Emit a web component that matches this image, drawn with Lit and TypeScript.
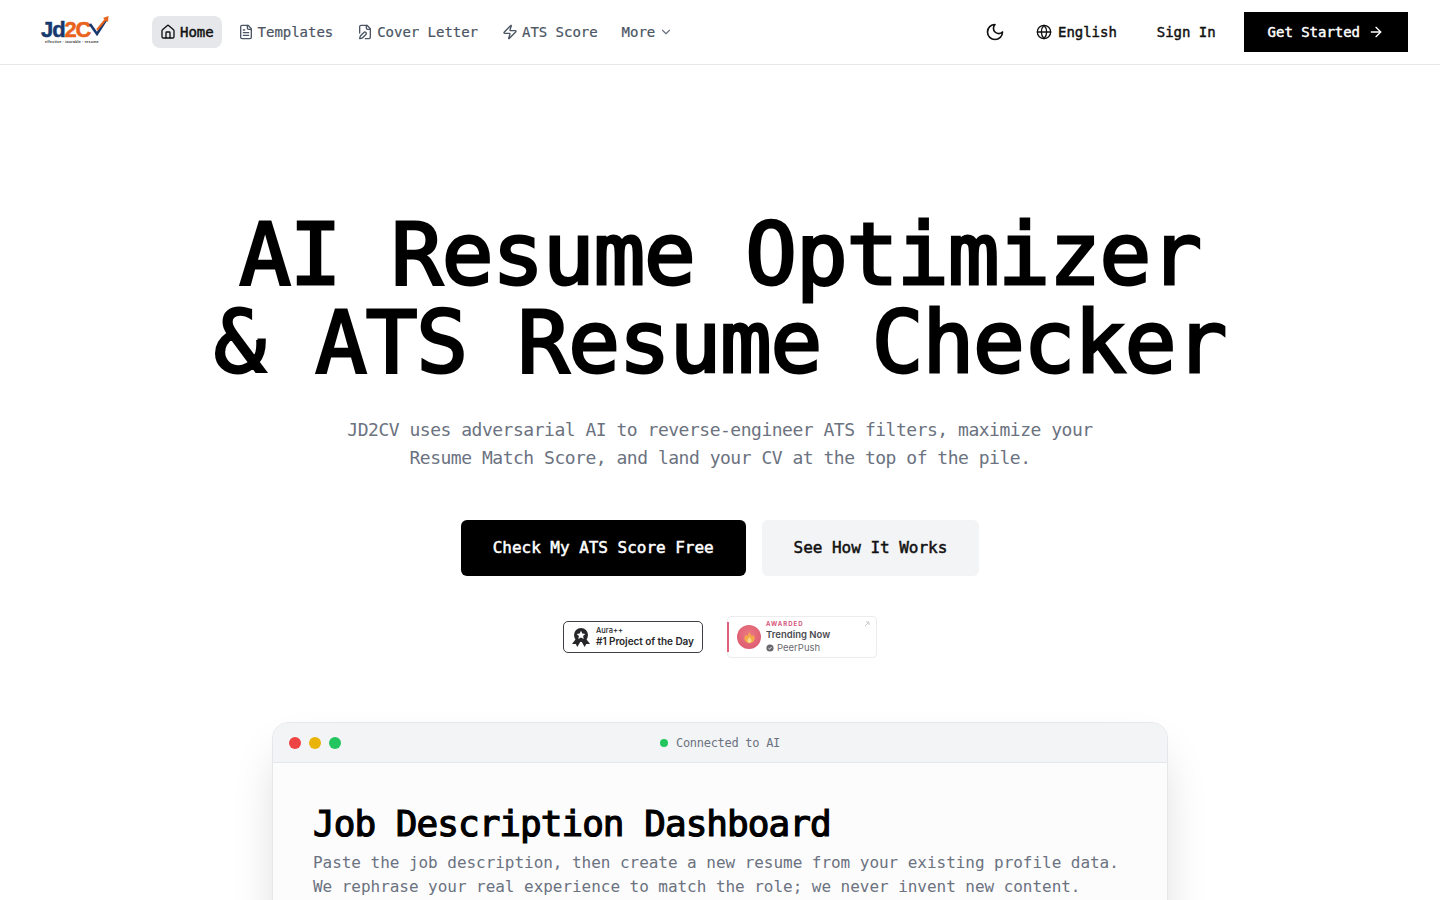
import { LitElement, html, css, svg } from "lit";
import { customElement } from "lit/decorators.js";

const ic = (paths: unknown, size = 16, cls = "") => html`<svg class=${cls} width=${size} height=${size} viewBox="0 0 24 24" fill="none" stroke="currentColor" stroke-width="2" stroke-linecap="round" stroke-linejoin="round">${paths}</svg>`;

const house = svg`<path d="M15 21v-8a1 1 0 0 0-1-1h-4a1 1 0 0 0-1 1v8"/><path d="M3 10a2 2 0 0 1 .709-1.528l7-5.999a2 2 0 0 1 2.582 0l7 5.999A2 2 0 0 1 21 10v9a2 2 0 0 1-2 2H5a2 2 0 0 1-2-2z"/>`;
const fileText = svg`<path d="M15 2H6a2 2 0 0 0-2 2v16a2 2 0 0 0 2 2h12a2 2 0 0 0 2-2V7Z"/><path d="M14 2v4a2 2 0 0 0 2 2h4"/><path d="M10 9H8"/><path d="M16 13H8"/><path d="M16 17H8"/>`;
const filePen = svg`<path d="M12.5 22H18a2 2 0 0 0 2-2V7l-5-5H6a2 2 0 0 0-2 2v9.5"/><path d="M14 2v4a2 2 0 0 0 2 2h4"/><path d="M13.378 15.626a1 1 0 1 0-3.004-3.004l-5.01 5.012a2 2 0 0 0-.506.854l-.837 2.87a.5.5 0 0 0 .62.62l2.87-.837a2 2 0 0 0 .854-.506z"/>`;
const zap = svg`<path d="M4 14a1 1 0 0 1-.78-1.63l9.9-10.2a.5.5 0 0 1 .86.46l-1.92 6.02A1 1 0 0 0 13 10h7a1 1 0 0 1 .78 1.63l-9.9 10.2a.5.5 0 0 1-.86-.46l1.92-6.02A1 1 0 0 0 11 14z"/>`;
const chevron = svg`<path d="m6 9 6 6 6-6"/>`;
const moon = svg`<path d="M12 3a6 6 0 0 0 9 9 9 9 0 1 1-9-9Z"/>`;
const globe = svg`<circle cx="12" cy="12" r="10"/><path d="M12 2a14.5 14.5 0 0 0 0 20 14.5 14.5 0 0 0 0-20"/><path d="M2 12h20"/>`;
const arrow = svg`<path d="M5 12h14"/><path d="m12 5 7 7-7 7"/>`;

@customElement("app-root")
export class AppRoot extends LitElement {
  static styles = css`
    :host {
      display: block;
      height: 900px;
      overflow: hidden;
      background: #fff;
      color: #000;
      font-family: "DejaVu Sans Mono", monospace;
    }
    * { box-sizing: border-box; }
    header {
      height: 65px;
      border-bottom: 1px solid #e5e7eb;
      display: flex;
      align-items: center;
      padding: 0 32px 0 41px;
    }
    .logo { width: 111px; height: 26px; flex: none; display: flex; flex-direction: column; }
    .logo-mark { display: flex; align-items: flex-start; height: 21px; position: relative; }
    .logo-text {
      font: 700 22px/21px "Liberation Sans", sans-serif;
      letter-spacing: -1.1px;
      color: #17396f;
      -webkit-text-stroke: 0.5px currentColor;
    }
    .logo-text b { color: #e9631d; font-weight: 700; }
    .logo-check { position: absolute; left: 44px; top: -4px; }
    .logo-tag {
      font: 700 3.6px/4px "Liberation Sans", sans-serif;
      color: #333;
      margin-left: 4px;
      letter-spacing: 0.2px;
      white-space: nowrap;
    }
    nav { display: flex; gap: 8px; align-items: center; }
    .item {
      display: flex;
      align-items: center;
      gap: 4px;
      height: 32px;
      padding: 0 8px;
      font-size: 14px;
      letter-spacing: -0.03px;
      color: #4b5563;
      border-radius: 8px;
      white-space: nowrap;
      -webkit-text-stroke: 0.2px currentColor;
    }
    .item.active { background: #e5e7eb; color: #111; -webkit-text-stroke: 0.45px currentColor; }
    .item .dim { color: #6b7280; }
    .right { margin-left: auto; display: flex; align-items: center; }
    .btn {
      display: flex;
      align-items: center;
      justify-content: center;
      height: 40px;
      font-size: 14px;
      letter-spacing: -0.03px;
      color: #111;
      white-space: nowrap;
      -webkit-text-stroke: 0.45px currentColor;
    }
    .moon { width: 40px; margin-right: 5px; }
    .lang { padding: 0 16px; gap: 6px; }
    .sign { padding: 0 24px; margin-right: 4px; }
    .start { padding: 0 24px; gap: 8px; background: #000; color: #fff; }
    .hero { display: flex; flex-direction: column; align-items: center; padding-top: 145px; }
    h1 {
      margin: 0;
      font-size: 86px;
      line-height: 88px;
      font-weight: 400;
      -webkit-text-stroke: 2.8px #000;
      letter-spacing: -1.17px;
      text-align: center;
      white-space: nowrap;
    }
    .sub {
      margin: 30px 0 0;
      font-size: 18px;
      line-height: 28px;
      letter-spacing: -0.486px;
      color: #6b7280;
      text-align: center;
    }
    .cta { display: flex; gap: 16px; margin-top: 48px; }
    .cta div {
      height: 56px;
      padding: 0 32px 2px;
      display: flex;
      align-items: center;
      border-radius: 6px;
      font-size: 16px;
      letter-spacing: -0.03px;
      -webkit-text-stroke: 0.5px currentColor;
    }
    .primary { background: #000; color: #fff; }
    .secondary { background: #f3f4f6; color: #111; }
    .badges { display: flex; align-items: center; gap: 24px; margin-top: 40px; }
    .aura {
      width: 140px;
      height: 32px;
      border: 1px solid #3f3f46;
      border-radius: 5px;
      display: flex;
      align-items: center;
      padding-left: 7px;
      gap: 5px;
      font-family: Inter, "Liberation Sans", sans-serif;
      color: #27272a;
    }
    .aura small { display: block; font-size: 7.5px; line-height: 8px; font-weight: 500; margin-top: -1px; }
    .aura strong { display: block; font-size: 10px; line-height: 12px; font-weight: 600; white-space: nowrap; letter-spacing: -0.06px; }
    .peer {
      width: 150px;
      height: 42px;
      border: 1px solid #ececee;
      border-radius: 4px;
      background: #fff;
      position: relative;
      display: flex;
      align-items: center;
      padding-left: 9px;
      gap: 5px;
      font-family: Inter, "Liberation Sans", sans-serif;
    }
    .bar { position: absolute; left: -1px; top: 5px; bottom: 5px; width: 2px; background: #e0607e; }
    .disc {
      width: 24px;
      height: 24px;
      border-radius: 50%;
      background: radial-gradient(circle at 50% 40%, #ec7a83, #d9536c);
      display: flex;
      align-items: center;
      justify-content: center;
      flex: none;
    }
    .peer em { display: block; font-style: normal; font-size: 6px; line-height: 8px; font-weight: 700; letter-spacing: 1px; color: #d6567a; }
    .peer strong { display: block; font-size: 9.5px; line-height: 13px; font-weight: 600; color: #4b4b52; white-space: nowrap; }
    .peer span { display: flex; align-items: center; gap: 3px; font-size: 9.5px; line-height: 13px; color: #6b6b72; }
    .corner { position: absolute; right: 6px; top: 4px; color: #c9c9ce; }
    .card {
      margin-top: 64px;
      width: 896px;
      flex: none;
      border: 1px solid #e5e7eb;
      border-radius: 16px 16px 0 0;
      background: #fcfcfd;
      box-shadow: 0 25px 50px -12px rgba(0, 0, 0, 0.2);
    }
    .bar-top {
      height: 40px;
      background: #f3f4f6;
      border-bottom: 1px solid #e5e7eb;
      border-radius: 15px 15px 0 0;
      display: flex;
      align-items: center;
      padding: 0 16px;
      position: relative;
      gap: 8px;
    }
    .dot { width: 12px; height: 12px; border-radius: 50%; }
    .status {
      position: absolute;
      inset: 0;
      display: flex;
      align-items: center;
      justify-content: center;
      gap: 8px;
      font-size: 12px;
      letter-spacing: -0.29px;
      color: #6b7280;
    }
    .status i { width: 8px; height: 8px; border-radius: 50%; background: #22c55e; }
    .body { padding: 41px 40px 40px; height: 200px; }
    h2 {
      margin: 0;
      font-size: 36px;
      line-height: 40px;
      font-weight: 400;
      -webkit-text-stroke: 1.2px #000;
      letter-spacing: -0.97px;
      white-space: nowrap;
    }
    .desc {
      margin: 7px 0 0;
      font-size: 16px;
      line-height: 24px;
      letter-spacing: -0.04px;
      color: #6b7280;
      white-space: nowrap;
    }
  `;

  render() {
    return html`
      <header>
        <div class="logo">
          <div class="logo-mark">
            <span class="logo-text">Jd<b>2C</b></span>
            <svg class="logo-check" width="24" height="22" viewBox="0 0 24 22" fill="none">
              <path d="M5 9 L12 19 L21 5" stroke="#17396f" stroke-width="2.6" stroke-linejoin="miter"/>
              <path d="M12 15 L21 4" stroke="#e9631d" stroke-width="2"/>
              <path d="M18 3 L23.5 1 L23 7 Z" fill="#e9631d"/>
            </svg>
          </div>
          <div class="logo-tag">effective · tourable · resume</div>
        </div>
        <nav>
          <div class="item active">${ic(house)}Home</div>
          <div class="item">${ic(fileText)}Templates</div>
          <div class="item">${ic(filePen)}Cover Letter</div>
          <div class="item">${ic(zap)}ATS Score</div>
          <div class="item">More${ic(chevron, 14, "dim")}</div>
        </nav>
        <div class="right">
          <div class="btn moon">${ic(moon, 20)}</div>
          <div class="btn lang">${ic(globe)}English</div>
          <div class="btn sign">Sign In</div>
          <div class="btn start">Get Started${ic(arrow)}</div>
        </div>
      </header>
      <main class="hero">
        <h1>AI Resume Optimizer<br />&amp; ATS Resume Checker</h1>
        <p class="sub">JD2CV uses adversarial AI to reverse-engineer ATS filters, maximize your<br />Resume Match Score, and land your CV at the top of the pile.</p>
        <div class="cta">
          <div class="primary">Check My ATS Score Free</div>
          <div class="secondary">See How It Works</div>
        </div>
        <div class="badges">
          <div class="aura">
            <svg width="20" height="21" viewBox="0 0 20 21">
              <path d="M5.5 11 L1 17 L4.8 17 L6.3 20 L9.5 14.5 Z M14.5 11 L19 17 L15.2 17 L13.7 20 L10.5 14.5 Z" fill="#27272a"/>
              <circle cx="10" cy="8" r="7" fill="#27272a"/>
              <path d="M10 3.8 L11.3 6.6 L14.3 7 L12.1 9 L12.7 12 L10 10.5 L7.3 12 L7.9 9 L5.7 7 L8.7 6.6 Z" fill="#fff"/>
            </svg>
            <div><small>Aura++</small><strong>#1 Project of the Day</strong></div>
          </div>
          <div class="peer">
            <div class="bar"></div>
            <div class="disc">
              <svg width="13" height="13" viewBox="0 0 13 13"><path d="M6.5 1 C7 3 8.5 4 9 5.5 C9.6 4.8 9.9 4.2 10 3.5 C11.3 5 12 6.8 11.5 8.6 C10.9 10.8 9 12 6.5 12 C4 12 2.1 10.8 1.5 8.6 C1 6.8 1.7 5 3 3.5 C3.1 4.2 3.4 4.8 4 5.5 C4.5 4 6 3 6.5 1Z" fill="#f4a94a"/><path d="M6.5 6 C7 7.5 8.5 8 8.5 9.6 C8.5 11 7.5 12 6.5 12 C5.5 12 4.5 11 4.5 9.6 C4.5 8 6 7.5 6.5 6Z" fill="#f9d98a"/></svg>
            </div>
            <div>
              <em>AWARDED</em>
              <strong>Trending Now</strong>
              <span><svg width="8" height="8" viewBox="0 0 8 8"><circle cx="4" cy="4" r="3.6" fill="#66666c"/><path d="M2.4 4.1 L3.6 5.2 L5.6 2.9" stroke="#fff" stroke-width="0.9" fill="none"/></svg>PeerPush</span>
            </div>
            <svg class="corner" width="6" height="6" viewBox="0 0 6 6" fill="none" stroke="currentColor"><path d="M1 5 L5 1 M2 1 H5 V4"/></svg>
          </div>
        </div>
        <section class="card">
          <div class="bar-top">
            <div class="dot" style="background:#ef4444"></div>
            <div class="dot" style="background:#eab308"></div>
            <div class="dot" style="background:#22c55e"></div>
            <div class="status"><i></i>Connected to AI</div>
          </div>
          <div class="body">
            <h2>Job Description Dashboard</h2>
            <p class="desc">Paste the job description, then create a new resume from your existing profile data.<br />We rephrase your real experience to match the role; we never invent new content.</p>
          </div>
        </section>
      </main>
    `;
  }
}
